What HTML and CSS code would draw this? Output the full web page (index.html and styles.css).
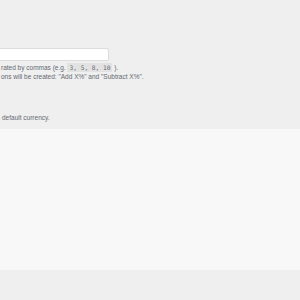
FILE: index.html
```html
<!DOCTYPE html>
<html lang="en">
  <head>
    <meta charset="UTF-8" />
    <meta name="viewport" content="width=device-width, initial-scale=1.0" />
    <title>Price adjustments</title>
    <link rel="stylesheet" href="styles.css">
  </head>
  <body>
    <div class="settings">
      <div class="field-row">
        <input class="regular-text" type="text" />
        <p class="description">
          rated by commas (e.g. <code>3, 5, 8, 10</code> ).<br>
          ons will be created: "Add X%" and "Subtract X%".
        </p>
      </div>

      <div class="field-row note-row">
        <p class="description">default currency.</p>
      </div>
    </div>

    <div class="panel"></div>
  </body>
</html>
```

FILE: styles.css
```css
body {
  margin: 0;
  background-color: #efefef;
  font-family: "Liberation Sans", Arial, sans-serif;
  color: #646970;
  overflow: hidden;
}
.settings {
  padding-top: 48px;
}
.field-row {
  margin: 0;
}
.regular-text {
  display: block;
  box-sizing: border-box;
  width: 114px;
  height: 13px;
  margin: 0 0 2px -5px;
  padding: 0;
  border: 1px solid #dcdcde;
  border-radius: 2px;
  background: #fff;
}
.description {
  margin: 0;
  padding-left: 1px;
  font-size: 6.5px;
  line-height: 9px;
}
.description code {
  font-family: "DejaVu Sans Mono", monospace;
  font-size: 6.2px;
  background: #e2e2e2;
  padding: 1px 2px;
}
.note-row {
  padding-top: 32px;
}
.note-row .description {
  padding-left: 2px;
}
.panel {
  margin-top: 7px;
  height: 141px;
  background: #f8f8f8;
}
```
